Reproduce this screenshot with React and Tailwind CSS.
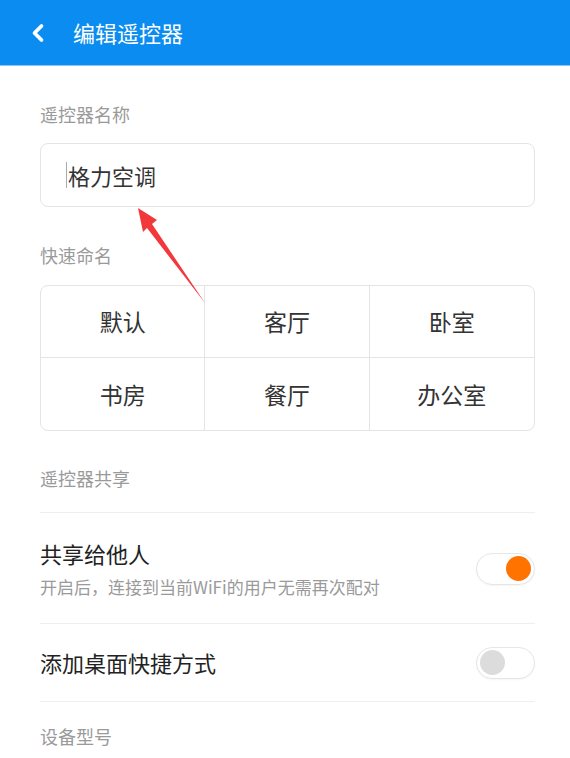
import { ChevronLeft } from "lucide-react"

const font = { fontFamily: '"Noto Sans CJK SC", "Noto Sans", sans-serif' }

function Toggle({ on }) {
  return (
    <div className="flex h-[32px] w-[59px] items-center rounded-full border border-[#e6e6e6] bg-white px-[3px] shadow-[0_1px_2px_rgba(0,0,0,0.04)]">
      <div
        className={
          on
            ? "ml-auto h-[25px] w-[25px] rounded-full bg-[#ff7300]"
            : "h-[25px] w-[25px] rounded-full bg-[#dcdcdc]"
        }
      />
    </div>
  )
}

function Arrow() {
  return (
    <svg className="pointer-events-none absolute left-0 top-0" width="570" height="758">
      <polygon
        points="138,208 157,220 152,224 205,303 147,228 143,232"
        fill="#f2383b"
      />
    </svg>
  )
}

export default function App() {
  const names = ["默认", "客厅", "卧室", "书房", "餐厅", "办公室"]

  return (
    <div className="relative h-[758px] w-[570px] overflow-hidden bg-white" style={font}>
      <div className="flex h-[65px] items-center bg-[#0a8cf0] pl-[24px] shadow-[0_1px_0_#8cc8f7]">
        <ChevronLeft className="h-[28px] w-[28px] text-white" strokeWidth={3.2} />
        <span className="ml-[21px] text-[22px] text-white">编辑遥控器</span>
      </div>

      <div className="pl-[40px] pr-[35px]">
        <div className="pt-[35px] text-[18px] leading-[28px] text-[#9a9a9a]">遥控器名称</div>
        <div className="mt-[15px] flex h-[64px] items-center rounded-[8px] border border-[#e4e4e4] pl-[25px]">
          <span className="mr-[1px] h-[26px] w-[1px] bg-[#aaa]" />
          <span className="text-[22px] text-[#333]">格力空调</span>
        </div>

        <div className="mt-[34px] text-[18px] leading-[28px] text-[#9a9a9a]">快速命名</div>
        <div className="mt-[16px] grid grid-cols-3 overflow-hidden rounded-[8px] border border-[#e4e4e4]">
          {names.map((n, i) => (
            <div
              key={n}
              className={
                "flex h-[72px] items-center justify-center text-[23px] text-[#333] " +
                (i % 3 !== 2 ? "border-r border-[#e4e4e4] " : "") +
                (i < 3 ? "border-b border-[#e4e4e4]" : "")
              }
            >
              {n}
            </div>
          ))}
        </div>

        <div className="mt-[33px] text-[18px] leading-[28px] text-[#9a9a9a]">遥控器共享</div>
        <div className="mt-[20px] border-t border-[#efefef]" />

        <div className="flex items-center justify-between pb-[23px] pt-[24px]">
          <div>
            <div className="text-[22px] leading-[32px] text-[#222]">共享给他人</div>
            <div className="mt-[5px] text-[17px] leading-[26px] text-[#9a9a9a]">开启后，连接到当前WiFi的用户无需再次配对</div>
          </div>
          <Toggle on />
        </div>
        <div className="border-t border-[#efefef]" />

        <div className="flex h-[77px] items-center justify-between">
          <div className="text-[22px] text-[#222]">添加桌面快捷方式</div>
          <Toggle />
        </div>
        <div className="border-t border-[#efefef]" />

        <div className="pt-[20px] text-[18px] leading-[28px] text-[#9a9a9a]">设备型号</div>
      </div>

      <Arrow />
    </div>
  )
}
